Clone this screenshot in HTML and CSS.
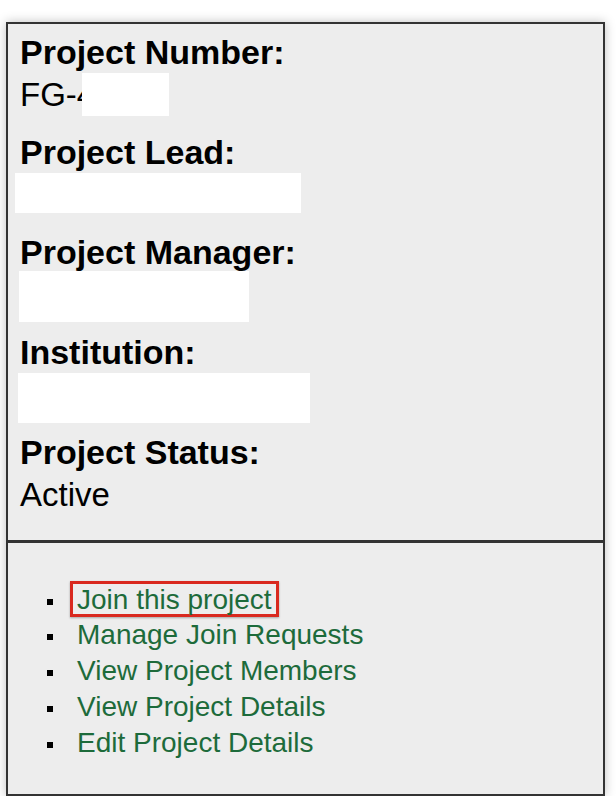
FILE: index.html
```html
<!DOCTYPE html>
<html lang="en">
<head>
<meta charset="utf-8">
<title>Project</title>
<link rel="stylesheet" href="styles.css">
</head>
<body>
<div class="page">
  <div class="card">
    <dl class="info">
      <dt>Project Number:</dt>
      <dd class="val">FG-4<span class="redact r-num"></span></dd>
      <dt>Project Lead:</dt>
      <dd class="val"><span class="redact r-lead"></span></dd>
      <dt>Project Manager:</dt>
      <dd class="val"><span class="redact r-mgr"></span></dd>
      <dt>Institution:</dt>
      <dd class="val"><span class="redact r-inst"></span></dd>
      <dt>Project Status:</dt>
      <dd class="val">Active</dd>
    </dl>
    <ul class="actions">
      <li><a href="#" class="link focused">Join this project</a></li>
      <li><a href="#" class="link">Manage Join Requests</a></li>
      <li><a href="#" class="link">View Project Members</a></li>
      <li><a href="#" class="link">View Project Details</a></li>
      <li><a href="#" class="link">Edit Project Details</a></li>
    </ul>
  </div>
</div>
</body>
</html>
```
FILE: styles.css
```css
html, body {
  margin: 0;
  padding: 0;
  background: #ffffff;
}
body {
  font-family: "Liberation Sans", Arial, Helvetica, sans-serif;
  color: #000;
}
.page {
  padding: 22px 11px 0 6px;
}
.card {
  width: 595px;
  border: 2px solid #333333;
  background: #ededed;
  box-shadow: 0 0 10px rgba(0, 0, 0, 0.25);
}
.info {
  margin: 0;
  padding: 8px 12px 23px 12px;
  border-bottom: 3px solid #333333;
}
.info dt {
  font-weight: bold;
  font-size: 34px;
  line-height: 40px;
  height: 40px;
}
.info dd {
  margin: 0 0 15px 0;
  font-size: 33px;
  line-height: 45px;
  height: 45px;
  position: relative;
}
.info dd:last-child {
  margin-bottom: 0;
}
.redact {
  position: absolute;
  background: #ffffff;
  display: block;
}
.r-num { left: 62px; top: 1px; width: 87px; height: 43px; }
.r-lead { left: -5px; top: 1px; width: 286px; height: 40px; }
.r-mgr { left: -1px; top: -1px; width: 230px; height: 51px; }
.r-inst { left: -2px; top: 1px; width: 292px; height: 50px; }

.actions {
  list-style: none;
  margin: 0;
  padding: 38px 0 33px 39px;
}
.actions li {
  font-size: 28px;
  line-height: 36px;
  height: 36px;
}
.actions li::before {
  content: "";
  display: inline-block;
  width: 6px;
  height: 6px;
  background: #000;
  vertical-align: middle;
  margin-right: 24px;
}
.link {
  color: #1d6b3b;
  text-decoration: none;
}
.link.focused {
  display: inline-block;
  line-height: 28px;
  padding: 2px 4px 0 4px;
  margin-left: -7px;
  border: 3px solid #d9291f;
  box-shadow: 0 1px 2px rgba(0, 0, 0, 0.3);
}
```
